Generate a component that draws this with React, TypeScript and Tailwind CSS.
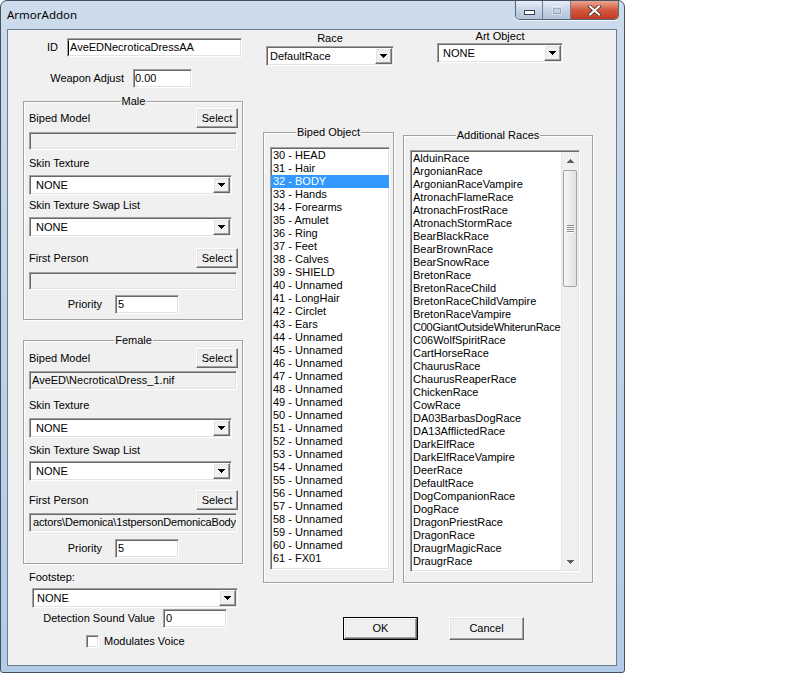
import type { ReactNode } from "react";

const sunken =
  "border border-t-[#a0a0a0] border-l-[#a0a0a0] border-r-white border-b-white shadow-[inset_1px_1px_0_#696969,inset_-1px_-1px_0_#e3e3e3]";
const raised =
  "border border-t-white border-l-white border-r-[#696969] border-b-[#696969] shadow-[inset_-1px_-1px_0_#a0a0a0,inset_1px_1px_0_#e3e3e3]";

const biped = [
  "30 - HEAD",
  "31 - Hair",
  "32 - BODY",
  "33 - Hands",
  "34 - Forearms",
  "35 - Amulet",
  "36 - Ring",
  "37 - Feet",
  "38 - Calves",
  "39 - SHIELD",
  "40 - Unnamed",
  "41 - LongHair",
  "42 - Circlet",
  "43 - Ears",
  ...Array.from({ length: 17 }, (_, i) => `${44 + i} - Unnamed`),
  "61 - FX01",
];

const races = [
  "AlduinRace",
  "ArgonianRace",
  "ArgonianRaceVampire",
  "AtronachFlameRace",
  "AtronachFrostRace",
  "AtronachStormRace",
  "BearBlackRace",
  "BearBrownRace",
  "BearSnowRace",
  "BretonRace",
  "BretonRaceChild",
  "BretonRaceChildVampire",
  "BretonRaceVampire",
  "C00GiantOutsideWhiterunRace",
  "C06WolfSpiritRace",
  "CartHorseRace",
  "ChaurusRace",
  "ChaurusReaperRace",
  "ChickenRace",
  "CowRace",
  "DA03BarbasDogRace",
  "DA13AfflictedRace",
  "DarkElfRace",
  "DarkElfRaceVampire",
  "DeerRace",
  "DefaultRace",
  "DogCompanionRace",
  "DogRace",
  "DragonPriestRace",
  "DragonRace",
  "DraugrMagicRace",
  "DraugrRace",
];

function Edit({ className = "", text = "", gray = false, caret = false }: { className?: string; text?: string; gray?: boolean; caret?: boolean }) {
  return (
    <div className={`${sunken} flex items-center overflow-hidden whitespace-nowrap ${gray ? "bg-[#f0f0f0]" : "bg-white"} ${className}`}>
      {caret && <span className="mr-[1px] h-[14px] w-[1px] shrink-0 bg-black" />}
      {text}
    </div>
  );
}

function Combo({ className = "", text = "", pad = "pl-[4px]" }: { className?: string; text?: string; pad?: string }) {
  return (
    <div className={`${sunken} flex bg-white ${className}`}>
      <div className={`flex flex-1 items-center whitespace-nowrap ${pad}`}>{text}</div>
      <div className={`${raised} my-[1px] mr-[1px] flex w-[17px] items-center justify-center bg-[#f0f0f0]`}>
        <svg width="7" height="4" viewBox="0 0 7 4" shapeRendering="crispEdges">
          <path d="M0 0h7v1H0zM1 1h5v1H1zM2 2h3v1H2zM3 3h1v1H3z" fill="#000" />
        </svg>
      </div>
    </div>
  );
}

function Btn({ className = "", label, def = false }: { className?: string; label: string; def?: boolean }) {
  if (def) {
    return (
      <div className={`border border-black ${className}`}>
        <div className={`${raised} flex h-full w-full items-center justify-center bg-[#f0f0f0]`}>{label}</div>
      </div>
    );
  }
  return <div className={`${raised} flex items-center justify-center bg-[#f0f0f0] ${className}`}>{label}</div>;
}

function Group({ title, className = "", children }: { title: string; className?: string; children: ReactNode }) {
  return (
    <div className={`flex flex-col border border-[#a0a0a0] shadow-[inset_1px_1px_0_#fff,1px_1px_0_#fff] ${className}`}>
      <div className="-mt-[7px] flex h-[13px] shrink-0 justify-center">
        <span className="bg-[#f0f0f0] px-[1px]">{title}</span>
      </div>
      {children}
    </div>
  );
}

function ScrollBar() {
  return (
    <div className="my-[1px] mr-[1px] flex w-[17px] shrink-0 flex-col border-l border-[#e6e6e6] bg-[#f0f0f0]">
      <div className="flex h-[17px] shrink-0 items-center justify-center">
        <svg width="7" height="4" viewBox="0 0 7 4" shapeRendering="crispEdges">
          <path d="M3 0h1v1H3zM2 1h3v1H2zM1 2h5v1H1zM0 3h7v1H0z" fill="#606060" />
        </svg>
      </div>
      <div className="mx-[1px] mt-[1px] flex h-[117px] shrink-0 items-center justify-center rounded-[2px] border border-[#a3a3a3] bg-gradient-to-r from-[#f6f6f6] to-[#e2e2e2]">
        <svg width="7" height="8" viewBox="0 0 7 8" shapeRendering="crispEdges">
          <path d="M0 0h7v1H0zM0 2h7v1H0zM0 4h7v1H0zM0 6h7v1H0z" fill="#8a8a8a" />
          <path d="M0 1h7v1H0zM0 3h7v1H0zM0 5h7v1H0zM0 7h7v1H0z" fill="#ffffff" />
        </svg>
      </div>
      <div className="flex-1" />
      <div className="flex h-[17px] shrink-0 items-center justify-center">
        <svg width="7" height="4" viewBox="0 0 7 4" shapeRendering="crispEdges">
          <path d="M0 0h7v1H0zM1 1h5v1H1zM2 2h3v1H2zM3 3h1v1H3z" fill="#606060" />
        </svg>
      </div>
    </div>
  );
}

function ListBox({ items, selected = -1, className = "", scroll = false }: { items: string[]; selected?: number; className?: string; scroll?: boolean }) {
  return (
    <div className={`${sunken} flex overflow-hidden bg-white ${className}`}>
      <div className="min-w-0 flex-1 overflow-hidden pt-[1px]">
        {items.map((it, i) => (
          <div
            key={it}
            className={`h-[13px] whitespace-nowrap pl-[2px] leading-[13px] ${it.length > 24 ? "tracking-[-0.25px]" : ""} ${i === selected ? "bg-[#3399ff] text-white" : ""}`}
          >
            {it}
          </div>
        ))}
      </div>
      {scroll && <ScrollBar />}
    </div>
  );
}

function GenderGroup({ title, model, first, female }: { title: string; model: string; first: string; female?: boolean }) {
  return (
    <Group title={title} className={female ? "mt-[20px] w-[220px] pb-[5px] pl-[5px] pr-[4px]" : "mt-[13px] w-[220px] pb-[5px] pl-[5px] pr-[4px]"}>
      <div className={`flex h-[20px] items-center justify-between ${female ? "mt-[1px]" : ""}`}>
        <span>Biped Model</span>
        <Btn className="h-[20px] w-[42px]" label="Select" />
      </div>
      <Edit className={female ? "mt-[3px] h-[19px] w-[208px] pl-[2px]" : "mt-[4px] h-[18px] w-[208px] pl-[2px]"} text={model} gray />
      <div className={`h-[13px] ${female ? "mt-[9px]" : "mt-[7px]"}`}>Skin Texture</div>
      <Combo className={`h-[20px] w-[203px] ${female ? "mt-[6px]" : "mt-[5px]"}`} text="NONE" pad="pl-[6px]" />
      <div className={`h-[13px] ${female ? "mt-[6px]" : "mt-[4px]"}`}>Skin Texture Swap List</div>
      <Combo className={`h-[20px] w-[203px] ${female ? "mt-[4px]" : "mt-[5px]"}`} text="NONE" pad="pl-[6px]" />
      <div className={`flex h-[20px] items-center justify-between ${female ? "mt-[9px]" : "mt-[11px]"}`}>
        <span>First Person</span>
        <Btn className="h-[20px] w-[42px]" label="Select" />
      </div>
      <Edit
        className={female ? "mt-[3px] h-[19px] w-[208px] pl-[3px] tracking-[-0.15px]" : "mt-[4px] h-[18px] w-[208px] pl-[2px]"}
        text={first}
        gray
      />
      <div className={`flex h-[19px] items-center ${female ? "mt-[7px]" : "mt-[5px]"}`}>
        <span className="w-[73px] text-right">Priority</span>
        <Edit className="ml-[13px] h-[19px] w-[64px] pl-[2px]" text="5" />
      </div>
    </Group>
  );
}

export default function App() {
  return (
    <div className="h-[685px] w-[800px] bg-white font-['Liberation_Sans',Arial,sans-serif] text-[11px] leading-[13px] text-black">
      <div className="flex h-[673px] w-[625px] flex-col rounded-t-[7px] rounded-b-[3px] border border-[#43505f] bg-gradient-to-b from-[#cddcec] via-[#bed2e8] to-[#b3cbe6]">
        {/* title bar */}
        <div className="flex h-[28px] shrink-0 items-start">
          <span className="ml-[6px] mt-[6px] font-['Noto_Sans',sans-serif] text-[11.5px] leading-[16px]">ArmorAddon</span>
          <div className="ml-auto mr-[5px] flex h-[19px] overflow-hidden rounded-b-[5px] border border-t-0 border-[#55657a] shadow-[0_1px_0_rgba(255,255,255,0.7)]">
            <div className="flex w-[27px] items-center justify-center border-r border-[#6e7e92] bg-gradient-to-b from-[#e6eef7] via-[#c6d4e5] to-[#b0c3da]">
              <svg width="11" height="5" viewBox="0 0 11 5" className="mt-[5px]">
                <rect x="0.5" y="0.5" width="10" height="4" fill="#fff" stroke="#3a4250" />
              </svg>
            </div>
            <div className="flex w-[28px] items-center justify-center border-r border-[#6e7e92] bg-gradient-to-b from-[#e6eef7] via-[#c6d4e5] to-[#b0c3da]">
              <svg width="10" height="9" viewBox="0 0 10 9" className="opacity-40">
                <rect x="0.5" y="0.5" width="9" height="8" fill="none" stroke="#fff" />
                <rect x="1.5" y="2.5" width="7" height="5" fill="none" stroke="#5a6a7e" />
              </svg>
            </div>
            <div className="flex w-[47px] items-center justify-center bg-gradient-to-b from-[#e9a593] via-[#d2573f] to-[#c23a20]">
              <svg width="13" height="11" viewBox="0 0 13 11">
                <path d="M2 1.5 L11 9.5 M11 1.5 L2 9.5" stroke="#4a2a24" strokeWidth="3.6" strokeLinecap="square" />
                <path d="M2 1.5 L11 9.5 M11 1.5 L2 9.5" stroke="#ffffff" strokeWidth="2" strokeLinecap="square" />
              </svg>
            </div>
          </div>
        </div>

        {/* client area */}
        <div className="ml-[6px] flex h-[637px] w-[610px] border border-[#6b7d92] bg-[#f0f0f0]">
          {/* left column */}
          <div className="ml-[15px] flex w-[220px] shrink-0 flex-col pt-[8px]">
            <div className="flex h-[19px] items-center">
              <span className="w-[35px] text-right">ID</span>
              <Edit className="ml-[9px] h-[19px] w-[175px]" text="AveEDNecroticaDressAA" caret />
            </div>
            <div className="mt-[12px] flex h-[19px] items-center">
              <span className="w-[101px] text-right">Weapon Adjust</span>
              <Edit className="ml-[9px] h-[19px] w-[59px] pl-[1px]" text="0.00" />
            </div>

            <GenderGroup title="Male" model="" first="" />
            <GenderGroup title="Female" model="AveED\Necrotica\Dress_1.nif" first="actors\Demonica\1stpersonDemonicaBody" female />

            <div className="mt-[7px] h-[13px] pl-[6px]">Footstep:</div>
            <Combo className="ml-[9px] mt-[4px] h-[20px] w-[206px]" text="NONE" pad="pl-[4px]" />
            <div className="mt-[1px] flex h-[19px] items-center">
              <span className="w-[132px] text-right">Detection Sound Value</span>
              <Edit className="ml-[8px] h-[19px] w-[64px] pl-[2px]" text="0" />
            </div>
            <div className="mt-[7px] flex h-[13px] items-center pl-[63px]">
              <div className={`${sunken} h-[13px] w-[13px] bg-white`} />
              <span className="ml-[5px]">Modulates Voice</span>
            </div>
          </div>

          {/* right region */}
          <div className="ml-[20px] flex w-[330px] shrink-0 flex-col">
            <div className="flex h-[36px] items-start">
              <div className="ml-[3px] mt-[2px] flex w-[128px] flex-col items-center">
                <span className="h-[13px]">Race</span>
                <Combo className="mt-[1px] h-[20px] w-[128px]" text="DefaultRace" pad="pl-[3px]" />
              </div>
              <div className="ml-[43px] flex w-[126px] flex-col items-center">
                <span className="h-[13px]">Art Object</span>
                <Combo className="h-[20px] w-[126px]" text="NONE" pad="pl-[5px]" />
              </div>
            </div>

            <div className="mt-[66px] flex items-start">
              <Group title="Biped Object" className="h-[451px] w-[131px] shrink-0">
                <ListBox items={biped} selected={2} className="ml-[6px] mt-[8px] h-[423px] w-[120px]" />
              </Group>
              <Group title="Additional Races" className="ml-[9px] mt-[3px] h-[448px] w-[190px] shrink-0">
                <ListBox items={races} className="ml-[6px] mt-[8px] h-[422px] w-[170px]" scroll />
              </Group>
            </div>

            <div className="ml-[80px] mt-[34px] flex">
              <Btn className="h-[23px] w-[75px]" label="OK" def />
              <Btn className="ml-[31px] h-[23px] w-[75px]" label="Cancel" />
            </div>
          </div>
        </div>
      </div>
    </div>
  );
}
